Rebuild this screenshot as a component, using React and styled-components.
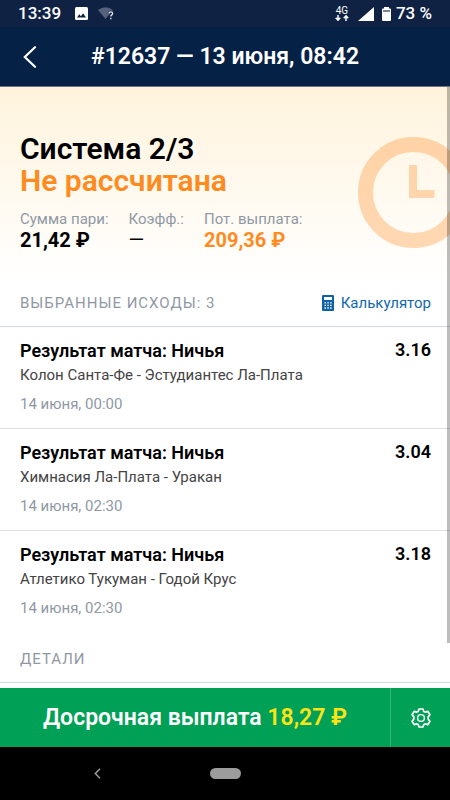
import styled, { createGlobalStyle } from "styled-components";

const GlobalStyle = createGlobalStyle`
  * {
    box-sizing: border-box;
  }

  body {
    margin: 0;
    background-color: #fff;
    color: #000;
    font-family: Roboto, "Liberation Sans", sans-serif;
  }

  h1, h2, h3, p, ul, dl, dd {
    margin: 0;
    padding: 0;
  }

  button {
    border: 0;
    padding: 0;
    background: none;
    color: inherit;
    font-family: inherit;
    cursor: pointer;
  }
`;

const Screen = styled.div`
  display: flex;
  flex-direction: column;
  height: 100vh;
`;

const StatusBar = styled.div`
  display: flex;
  align-items: center;
  flex-shrink: 0;
  height: 27px;
  padding: 0 18px;
  background-color: #0f2244;
  color: #fff;
  font-size: 17px;
  font-weight: 500;
  line-height: 27px;
`;

const StatusIcons = styled.div`
  display: flex;
  align-items: center;
  gap: 10px;
  margin-left: 14px;
`;

const StatusRight = styled.div`
  display: flex;
  align-items: center;
  margin-left: auto;
`;

const Network = styled.div`
  display: flex;
  flex-direction: column;
  align-items: center;
  margin-right: 9px;
  font-size: 10px;
  font-weight: 400;
  line-height: 9px;
`;

const Signal = styled.svg`
  margin-right: 8px;
`;

const Battery = styled.svg`
  margin-right: 5px;
`;

const Header = styled.header`
  display: grid;
  grid-template-columns: 60px 1fr 60px;
  align-items: center;
  flex-shrink: 0;
  height: 60px;
  border-bottom: 1px solid #6b7482;
  background-color: #052146;
  color: #fff;
`;

const BackButton = styled.button`
  display: flex;
  justify-content: center;
  align-items: center;
  height: 100%;
`;

const Title = styled.h1`
  text-align: center;
  font-size: 23px;
  font-weight: 600;
  line-height: 28px;
  white-space: nowrap;
`;

const Content = styled.main`
  position: relative;
  flex: 1;
  min-height: 0;
  overflow: hidden;
`;

const ScrollThumb = styled.div`
  position: absolute;
  top: 0;
  right: 0;
  width: 3px;
  height: 556px;
  background-color: rgba(0, 0, 0, 0.26);
`;

const Summary = styled.section`
  position: relative;
  overflow: hidden;
  padding: 46px 20px 28px;
  background: linear-gradient(#fff3dc, #fff);
`;

const Clock = styled.svg`
  position: absolute;
  top: 50px;
  right: -19px;
`;

const SystemName = styled.h2`
  color: ${(props) => (props.$accent ? "#ff8a1e" : "#000")};
  font-size: 30px;
  font-weight: 600;
  line-height: 32px;
`;

const Figures = styled.dl`
  display: flex;
  gap: 20px;
  margin-top: 12px;
`;

const FigureLabel = styled.dt`
  color: #8f99a3;
  font-size: 15px;
  line-height: 20px;
`;

const FigureValue = styled.dd`
  color: ${(props) => (props.$accent ? "#ff8a1e" : "#000")};
  font-size: 20px;
  font-weight: ${(props) => (props.$empty ? 400 : 700)};
  line-height: 22px;
`;

const SectionHeader = styled.div`
  display: flex;
  justify-content: space-between;
  align-items: center;
  height: 48px;
  padding: 0 19px 0 20px;
  border-bottom: 1px solid #d3d9df;
`;

const SectionTitle = styled.h2`
  color: #8f99a3;
  font-size: 15px;
  font-weight: 400;
  line-height: 20px;
  letter-spacing: 1px;
`;

const CalculatorLink = styled.a`
  display: flex;
  align-items: center;
  gap: 7px;
  color: #1268ac;
  font-size: 15px;
  line-height: 20px;
  text-decoration: none;
`;

const OutcomeList = styled.ul`
  padding-bottom: 2px;
  list-style: none;
`;

const Outcome = styled.li`
  display: flex;
  justify-content: space-between;
  height: 102px;
  padding: 12px 19px 0 20px;

  &:not(:last-child) {
    border-bottom: 1px solid #dcdfe6;
  }
`;

const OutcomeTitle = styled.h3`
  font-size: 18px;
  font-weight: 600;
  line-height: 24px;
`;

const Teams = styled.p`
  color: #444;
  font-size: 15px;
  line-height: 24px;
`;

const StartTime = styled.p`
  margin-top: 6px;
  color: #8f99a3;
  font-size: 15px;
  line-height: 22px;
`;

const Odds = styled.span`
  font-size: 18px;
  font-weight: 600;
  line-height: 22px;
`;

const CashoutBar = styled.div`
  display: flex;
  flex-shrink: 0;
  height: 59px;
  background-color: #00a056;
  color: #fff;
`;

const CashoutButton = styled.button`
  flex: 1;
  font-size: 23px;
  font-weight: 600;
  line-height: 28px;
`;

const CashoutAmount = styled.span`
  color: #fbe317;
`;

const SettingsButton = styled.button`
  display: flex;
  justify-content: center;
  align-items: center;
  width: 60px;
  border-left: 1px solid #33b378;
`;

const NavBar = styled.nav`
  display: grid;
  grid-template-columns: 1fr 62px 1fr;
  align-items: center;
  flex-shrink: 0;
  height: 53px;
  background-color: #000;
`;

const NavBack = styled.button`
  display: flex;
  justify-content: center;
  align-items: center;
  height: 100%;
`;

const NavHome = styled.button`
  justify-self: center;
  width: 31px;
  height: 11px;
  border-radius: 6px;
  background-color: #9c9c9c;
`;

const outcomes = [
  {
    teams: "Колон Санта-Фе - Эстудиантес Ла-Плата",
    time: "14 июня, 00:00",
    odds: "3.16",
  },
  {
    teams: "Химнасия Ла-Плата - Уракан",
    time: "14 июня, 02:30",
    odds: "3.04",
  },
  {
    teams: "Атлетико Тукуман - Годой Крус",
    time: "14 июня, 02:30",
    odds: "3.18",
  },
];

const PhoneStatus = () => {
  return (
    <StatusBar>
      <span>13:39</span>
      <StatusIcons>
        <svg width="13" height="13" viewBox="0 0 13 13">
          <rect width="13" height="13" rx="1.5" fill="#fff" />
          <path d="M2 10.5 L4.3 7.3 L5.9 9.2 L8.1 6.3 L11 10.5 Z" fill="#0f2244" />
        </svg>
        <svg width="16" height="13" viewBox="0 0 16 13">
          <path d="M0 3 Q7.5 -2.5 15 3 L7.5 12 Z" fill="#56627b" />
          <path
            d="M11 6.4 Q11 4.8 12.8 4.8 Q14.6 4.8 14.6 6.4 Q14.6 7.4 13.5 8.1 Q12.8 8.6 12.8 9.6 M12.8 10.8 V12.2"
            fill="none"
            stroke="#0f2244"
            strokeWidth="2.6"
          />
          <path
            d="M11 6.4 Q11 4.8 12.8 4.8 Q14.6 4.8 14.6 6.4 Q14.6 7.4 13.5 8.1 Q12.8 8.6 12.8 9.6 M12.8 10.8 V12.2"
            fill="none"
            stroke="#e4e8ee"
            strokeWidth="1.3"
          />
        </svg>
      </StatusIcons>
      <StatusRight>
        <Network>
          <span>4G</span>
          <svg width="14" height="6" viewBox="0 0 14 6">
            <path
              d="M3 0 V5 M0.7 2.8 L3 5.2 L5.3 2.8 M11 6 V1 M8.7 3.2 L11 0.8 L13.3 3.2"
              fill="none"
              stroke="#fff"
              strokeWidth="1.5"
            />
          </svg>
        </Network>
        <Signal width="16" height="14" viewBox="0 0 16 14">
          <path d="M16 0 V14 H0 Z" fill="#fff" />
        </Signal>
        <Battery width="9" height="14" viewBox="0 0 9 14">
          <path d="M2 0 H7 V1.4 H8 Q9 1.4 9 2.4 V13 Q9 14 8 14 H1 Q0 14 0 13 V2.4 Q0 1.4 1 1.4 H2 Z" fill="#fff" />
          <rect x="1" y="3" width="7" height="2" fill="#7d8799" />
        </Battery>
        <span>73 %</span>
      </StatusRight>
    </StatusBar>
  );
};

const SelectedOutcomes = () => {
  return (
    <section>
      <SectionHeader>
        <SectionTitle>ВЫБРАННЫЕ ИСХОДЫ: 3</SectionTitle>
        <CalculatorLink href="#calculator">
          <svg width="12" height="16" viewBox="0 0 12 16">
            <rect width="12" height="16" rx="1" fill="#0f62a6" />
            <rect x="2" y="2" width="8" height="3" fill="#fff" />
            <path
              d="M2.5 7.8 H4 M5.3 7.8 H6.8 M8.1 7.8 H9.6 M2.5 10.4 H4 M5.3 10.4 H6.8 M8.1 10.4 H9.6 M2.5 13 H4 M5.3 13 H6.8 M8.1 13 H9.6"
              stroke="#fff"
              strokeWidth="1.3"
            />
          </svg>
          Калькулятор
        </CalculatorLink>
      </SectionHeader>
      <OutcomeList>
        {outcomes.map((outcome) => (
          <Outcome key={outcome.teams}>
            <div>
              <OutcomeTitle>Результат матча: Ничья</OutcomeTitle>
              <Teams>{outcome.teams}</Teams>
              <StartTime>{outcome.time}</StartTime>
            </div>
            <Odds>{outcome.odds}</Odds>
          </Outcome>
        ))}
      </OutcomeList>
    </section>
  );
};

const App = () => {
  return (
    <Screen>
      <GlobalStyle />
      <PhoneStatus />
      <Header>
        <BackButton aria-label="Назад">
          <svg width="14" height="22" viewBox="0 0 14 22">
            <path
              d="M12 1.2 L1.8 11 L12 20.8"
              fill="none"
              stroke="#fff"
              strokeWidth="2.2"
              strokeLinecap="round"
            />
          </svg>
        </BackButton>
        <Title>#12637 — 13 июня, 08:42</Title>
      </Header>
      <Content>
        <Summary>
          <Clock width="111" height="111" viewBox="0 0 111 111">
            <g fill="none" stroke="#ff8a1e" strokeOpacity="0.32">
              <circle cx="55.5" cy="55.5" r="48" strokeWidth="15" />
              <path d="M55 28 V57 H76.5" strokeWidth="8" />
            </g>
          </Clock>
          <SystemName>Система 2/3</SystemName>
          <SystemName as="p" $accent>
            Не рассчитана
          </SystemName>
          <Figures>
            <div>
              <FigureLabel>Сумма пари:</FigureLabel>
              <FigureValue>21,42 ₽</FigureValue>
            </div>
            <div>
              <FigureLabel>Коэфф.:</FigureLabel>
              <FigureValue $empty>—</FigureValue>
            </div>
            <div>
              <FigureLabel>Пот. выплата:</FigureLabel>
              <FigureValue $accent>209,36 ₽</FigureValue>
            </div>
          </Figures>
        </Summary>
        <SelectedOutcomes />
        <SectionHeader>
          <SectionTitle>ДЕТАЛИ</SectionTitle>
        </SectionHeader>
        <ScrollThumb />
      </Content>
      <CashoutBar>
        <CashoutButton>
          Досрочная выплата <CashoutAmount>18,27 ₽</CashoutAmount>
        </CashoutButton>
        <SettingsButton aria-label="Настройки">
          <svg width="20" height="20" viewBox="0 0 20 20">
            <g fill="none" stroke="#fff" strokeWidth="1.7" strokeLinejoin="round">
              <path d="M8 1 H12 L12.8 3.4 L14.2 4.1 L16.9 3.4 L18.9 6.8 L17.2 8.9 V11.1 L18.9 13.2 L16.9 16.6 L14.2 15.9 L12.8 16.6 L12 19 H8 L7.2 16.6 L5.8 15.9 L3.1 16.6 L1.1 13.2 L2.8 11.1 V8.9 L1.1 6.8 L3.1 3.4 L5.8 4.1 L7.2 3.4 Z" />
              <circle cx="10" cy="10" r="3.4" strokeWidth="1.4" />
            </g>
          </svg>
        </SettingsButton>
      </CashoutBar>
      <NavBar>
        <NavBack aria-label="Назад">
          <svg width="7" height="11" viewBox="0 0 7 11">
            <path d="M6 0.8 L1.3 5.5 L6 10.2" fill="none" stroke="#9c9c9c" strokeWidth="1.5" />
          </svg>
        </NavBack>
        <NavHome aria-label="Домой" />
      </NavBar>
    </Screen>
  );
};

export default App;
